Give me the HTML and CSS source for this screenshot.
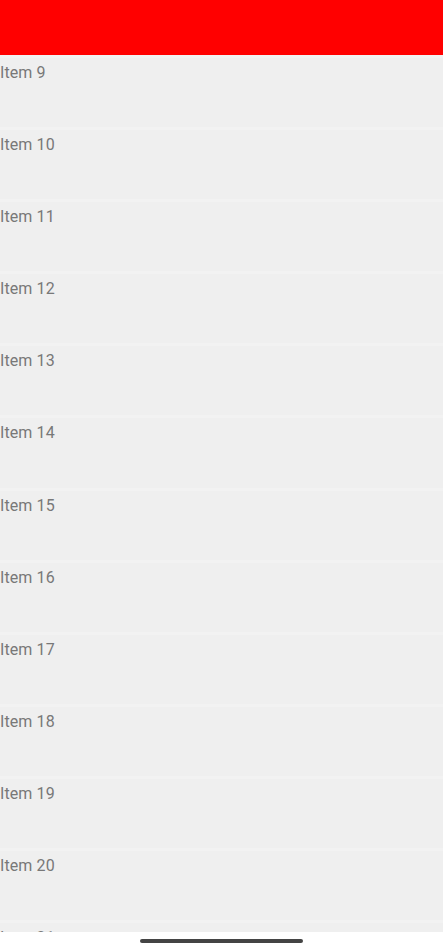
FILE: index.html
```html
<!DOCTYPE html>
<html lang="en">
<head>
    <meta charset="UTF-8">
    <meta name="viewport" content="width=device-width, initial-scale=1.0">
    <title>List</title>
    <link rel="stylesheet" href="styles.css">
</head>
<body>
    <div class="screen">
        <!-- Header bar -->
        <div class="header"></div>

        <!-- Scrolled list -->
        <div class="list">
            <div class="item"><span class="label">Item 9</span></div>
            <div class="item"><span class="label">Item 10</span></div>
            <div class="item"><span class="label">Item 11</span></div>
            <div class="item"><span class="label">Item 12</span></div>
            <div class="item"><span class="label">Item 13</span></div>
            <div class="item"><span class="label">Item 14</span></div>
            <div class="item"><span class="label">Item 15</span></div>
            <div class="item"><span class="label">Item 16</span></div>
            <div class="item"><span class="label">Item 17</span></div>
            <div class="item"><span class="label">Item 18</span></div>
            <div class="item"><span class="label">Item 19</span></div>
            <div class="item"><span class="label">Item 20</span></div>
            <div class="item"><span class="label">Item 21</span></div>
        </div>

        <!-- Gesture bar -->
        <div class="nav-bar">
            <div class="home-indicator"></div>
        </div>
    </div>
</body>
</html>
```

FILE: styles.css
```css
body {
    margin: 0;
    background-color: #ffffff;
    font-family: Roboto, "Noto Sans", sans-serif;
}
.screen {
    width: 443px;
    height: 950px;
    display: flex;
    flex-direction: column;
    overflow: hidden;
}
.header {
    height: 55px;
    background-color: #ff0000;
    flex-shrink: 0;
}
.list {
    height: 877px;
    overflow: hidden;
    background-color: #efefef;
    flex-shrink: 0;
}
.item {
    height: 72.1px;
    box-sizing: border-box;
    padding-top: 5px;
    background-color: #efefef;
    border-top: 3px solid #f2f2f2;
}
.label {
    font-size: 16px;
    color: #787878;
    line-height: 19px;
    letter-spacing: 0.1px;
}
.nav-bar {
    flex: 1;
    display: flex;
    justify-content: center;
    align-items: flex-start;
    padding-top: 7px;
}
.home-indicator {
    width: 163px;
    height: 4px;
    border-radius: 2px;
    background-color: #444444;
}
```
